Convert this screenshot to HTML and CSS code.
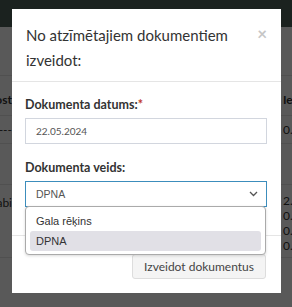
FILE: index.html
```html
<!DOCTYPE html>
<html lang="lv">
<head>
  <meta charset="UTF-8">
  <title>Izveidot dokumentus</title>
  <link rel="stylesheet" href="styles.css">
</head>
<body>
  <header class="topbar"></header>

  <div class="page">
    <div class="row head">
      <div class="c-left"><span>Nost</span></div>
      <div class="c-mid"></div>
      <div class="c-right"><span>Ie</span></div>
    </div>
    <div class="row">
      <div class="c-left"><span>---</span></div>
      <div class="c-mid"></div>
      <div class="c-right"><span>0.5</span></div>
    </div>
    <div class="row empty">
      <div class="c-left"></div>
      <div class="c-mid"></div>
      <div class="c-right"></div>
    </div>
    <div class="row multi">
      <div class="c-left"><span>Labi</span></div>
      <div class="c-mid"></div>
      <div class="c-right">
        <span>2.5</span>
        <span>0.46</span>
        <span>0.46</span>
        <span>0.25</span>
      </div>
    </div>
  </div>

  <div class="backdrop"></div>

  <div class="modal">
    <div class="modal-header">
      <h2>No atzīmētajiem dokumentiem izveidot:</h2>
      <span class="close">&times;</span>
    </div>
    <div class="modal-body">
      <label class="field-label">Dokumenta datums:<span class="req">*</span></label>
      <div class="input">22.05.2024</div>

      <label class="field-label">Dokumenta veids:</label>
      <div class="select-wrap">
        <div class="select">
          <span>DPNA</span>
          <svg class="chevron" width="9" height="6" viewBox="0 0 9 6"><path d="M1 1l3.5 3.5L8 1" fill="none" stroke="#555" stroke-width="1.3"/></svg>
        </div>
        <ul class="options">
          <li>Gala rēķins</li>
          <li class="selected">DPNA</li>
        </ul>
      </div>
    </div>
    <div class="modal-footer">
      <button class="btn">Izveidot dokumentus</button>
    </div>
  </div>
</body>
</html>
```

FILE: styles.css
```css
body {
  margin: 0;
  font-family: 'Lato', sans-serif;
  background: #fff;
  color: #333;
  overflow: hidden;
  height: 307px;
}

.topbar {
  height: 27px;
  background: #4f6259;
}

/* table behind the dialog */
.page {
  padding-top: 48px;
  font-size: 12px;
}

.row {
  display: flex;
  height: 27px;
  border-top: 1px solid #e4e4e4;
  align-items: center;
}

.row.head {
  height: 40px;
  font-weight: bold;
  align-items: flex-end;
  padding-bottom: 8px;
  box-sizing: border-box;
}

.row.empty {
  height: 40px;
}

.row.multi {
  height: 74px;
  align-items: flex-start;
  padding-top: 8px;
  box-sizing: border-box;
  border-bottom: 1px solid #e4e4e4;
}

.c-left {
  width: 12px;
  display: flex;
  justify-content: flex-end;
  overflow: hidden;
  white-space: nowrap;
}

.c-mid {
  flex: 1;
}

.c-right {
  width: 9px;
  display: flex;
  flex-direction: column;
  overflow: hidden;
  white-space: nowrap;
  line-height: 15px;
}

.row.multi .c-left {
  padding-top: 2px;
}

.backdrop {
  position: fixed;
  inset: 0;
  background: rgba(0, 0, 0, 0.65);
}

/* dialog */
.modal {
  position: fixed;
  top: 9px;
  left: 12px;
  width: 269px;
  height: 284px;
  background: #fff;
}

.modal-header {
  display: flex;
  justify-content: space-between;
  align-items: flex-start;
  padding: 14px 14px 8px 14px;
  border-bottom: 1px solid #e5e5e5;
}

.modal-header h2 {
  margin: 0;
  font-size: 15px;
  font-weight: normal;
  line-height: 25px;
  color: #333;
}

.close {
  font-size: 17px;
  line-height: 18px;
  color: #c6c6c6;
  font-weight: bold;
  margin-top: 2px;
}

.modal-body {
  padding: 15px 14px 0 13px;
}

.field-label {
  display: block;
  font-size: 12.5px;
  line-height: 15px;
  font-weight: bold;
  margin-bottom: 6px;
  color: #333;
}

.req {
  color: #c0392b;
}

.input, .select {
  height: 26px;
  border: 1px solid #d2d6de;
  box-sizing: border-box;
  padding: 0 10px;
  display: flex;
  align-items: center;
  color: #555;
}

.input {
  font-size: 10px;
  margin-bottom: 16px;
}

.select-wrap {
  position: relative;
}

.select {
  justify-content: space-between;
  border-color: #3c8dbc;
  font-family: 'Liberation Sans', Arial, sans-serif;
  font-size: 10.5px;
}

.chevron {
  margin-right: -2px;
}

.options {
  position: absolute;
  top: 25px;
  left: 0;
  right: 1px;
  margin: 0;
  padding: 4px 4px 3px;
  list-style: none;
  background: #fff;
  border: 1px solid #aaa;
  border-radius: 4px;
  box-shadow: 0 1px 3px rgba(0, 0, 0, 0.15);
  font-family: 'Liberation Sans', Arial, sans-serif;
  font-size: 11px;
  color: #333;
  z-index: 2;
}

.options li {
  height: 20px;
  line-height: 20px;
  padding: 0 6px;
}

.options li.selected {
  background: #e1e0e6;
  border-radius: 3px;
}

.modal-footer {
  margin-top: 28px;
  border-top: 1px solid #e5e5e5;
  padding: 18px 15px 0;
  display: flex;
  justify-content: flex-end;
}

.btn {
  font-family: 'Lato', sans-serif;
  font-size: 12px;
  color: #444;
  background: #f4f4f4;
  border: 1px solid #ddd;
  border-radius: 3px;
  height: 25px;
  padding: 0 11px;
}
```
